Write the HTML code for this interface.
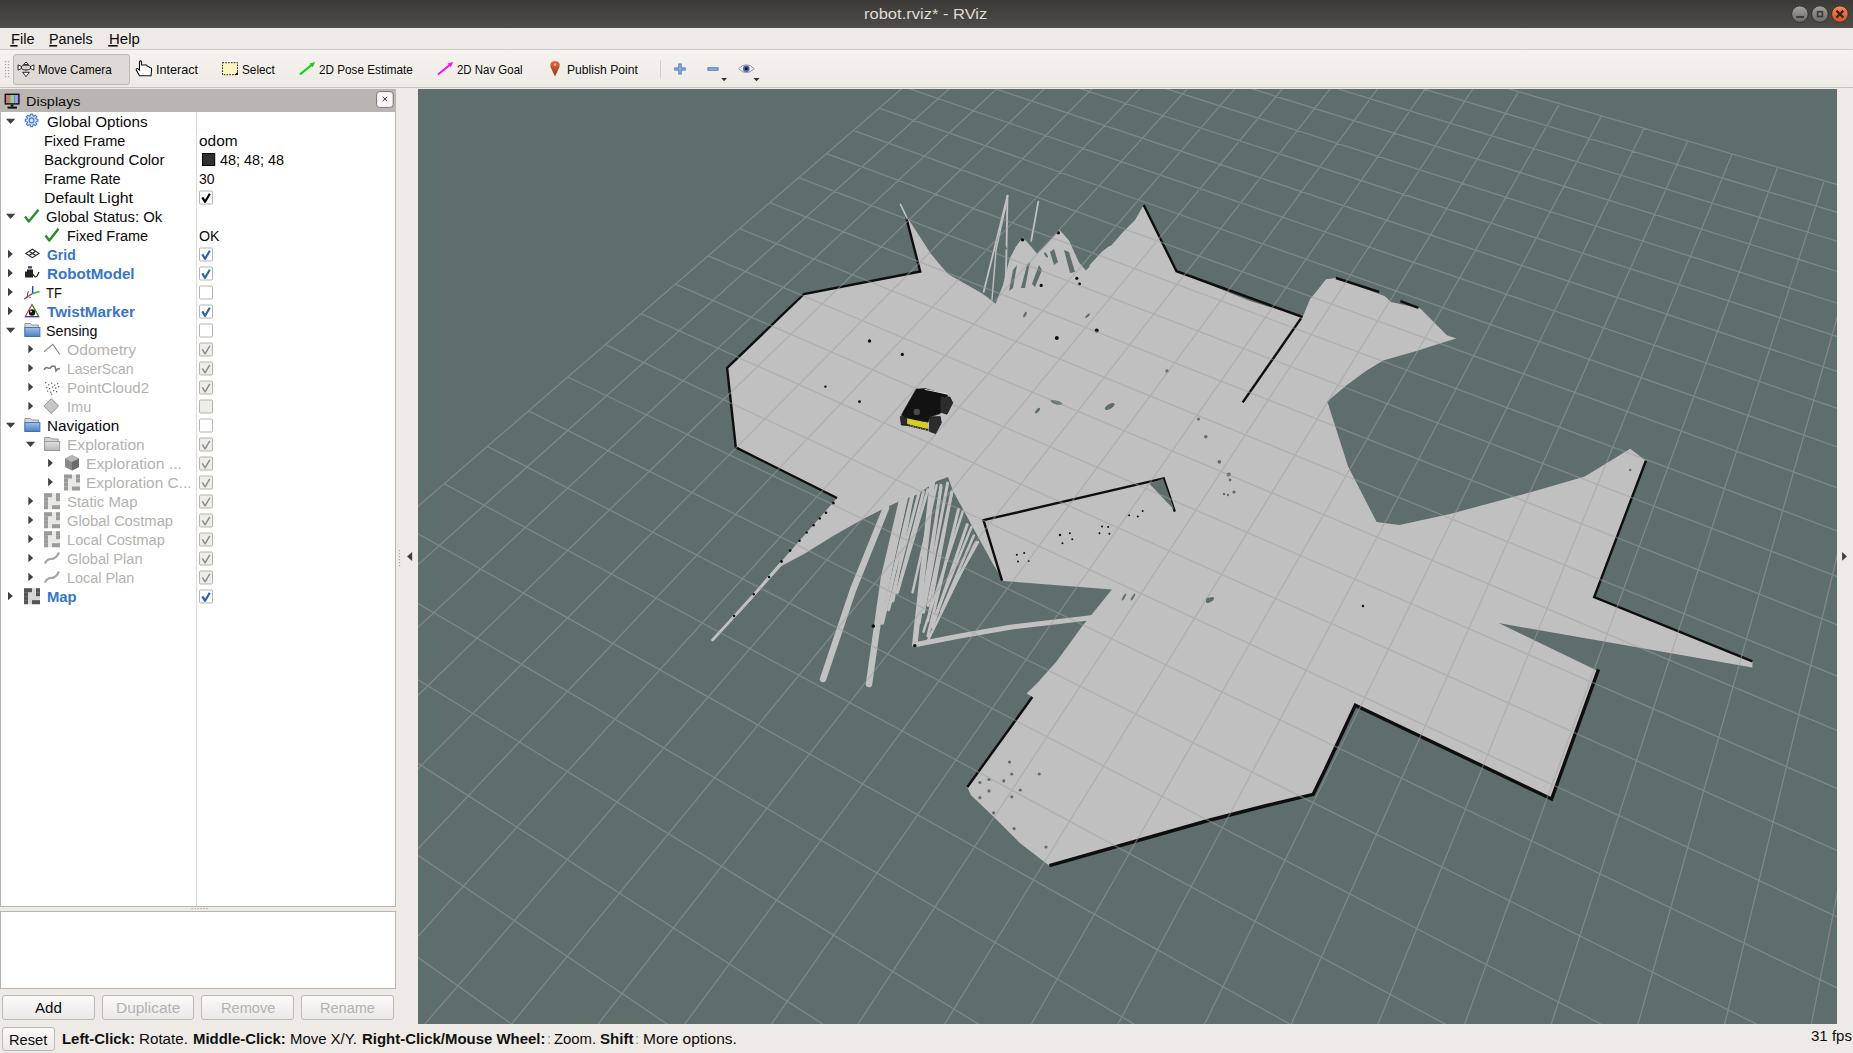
<!DOCTYPE html><html><head><meta charset="utf-8"><style>

*{margin:0;padding:0;box-sizing:border-box}
html,body{width:1853px;height:1053px;overflow:hidden;background:#eeebe6;font-family:"Liberation Sans",sans-serif}
.t{position:absolute;white-space:pre;transform-origin:0 0}
.a{position:absolute}
.vp{position:absolute;left:418px;top:89px}

</style></head><body>
<div class="a" style="left:0;top:0;width:1853px;height:28px;background:linear-gradient(#3b3a36,#4e4c47)"></div>
<div class="a" style="left:0;top:28px;width:1853px;height:21px;background:#eeebe6"></div>
<div class="a" style="left:0;top:49px;width:1853px;height:1px;background:#d0cdc8"></div>
<div class="a" style="left:0;top:50px;width:1853px;height:37px;background:linear-gradient(#f6f3ee,#eeebe6)"></div>
<div class="a" style="left:0;top:87px;width:1853px;height:1px;background:#c6c3be"></div>
<div class="a" style="left:13px;top:54px;width:117px;height:31px;background:#dedad6;border:1px solid #bcb8b3;border-radius:3px"></div>
<div class="a" style="left:0;top:89px;width:396px;height:23px;background:#b9b5b1"></div>
<div class="a" style="left:0;top:112px;width:396px;height:795px;background:#fff;border:1px solid #b9b6b1;border-top:none"></div>
<div class="a" style="left:196px;top:112px;width:1px;height:794px;background:#dcdad7"></div>
<div class="a" style="left:0;top:911px;width:396px;height:78px;background:#fff;border:1px solid #b9b6b1"></div>
<div class="a" style="left:2px;top:995px;width:93px;height:25px;background:linear-gradient(#fbfaf9,#ebe9e6);border:1px solid #bdbab5;border-radius:3px"></div>
<div class="a" style="left:102px;top:995px;width:92px;height:25px;background:linear-gradient(#fbfaf9,#ebe9e6);border:1px solid #bdbab5;border-radius:3px"></div>
<div class="a" style="left:201px;top:995px;width:93px;height:25px;background:linear-gradient(#fbfaf9,#ebe9e6);border:1px solid #bdbab5;border-radius:3px"></div>
<div class="a" style="left:301px;top:995px;width:93px;height:25px;background:linear-gradient(#fbfaf9,#ebe9e6);border:1px solid #bdbab5;border-radius:3px"></div>
<div class="a" style="left:2px;top:1027px;width:53px;height:24px;background:linear-gradient(#fbfaf9,#ebe9e6);border:1px solid #bdbab5;border-radius:3px"></div>
<svg class="vp" width="1419" height="935" viewBox="0 0 1419 935">
<rect width="1419" height="935" fill="rgb(93,110,108)"/>
<polygon fill="rgb(192,192,192)" points="386.0,205.0 502.2,182.5 488.2,129.5 489.3,128.4 499.6,144.3 512.1,163.7 521.3,175.1 530.4,185.3 548.6,195.6 564.6,204.7 572.9,211.1 577.6,214.7 584.7,196.9 591.8,169.6 597.8,157.7 604.9,148.2 613.2,157.7 619.1,164.8 628.6,155.3 641.7,141.1 651.2,151.8 660.7,173.1 667.8,181.4 684.4,164.8 692.0,157.7 705.8,142.3 717.0,131.0 725.7,116.0 758.5,182.2 832.0,212.0 884.6,228.0 892.0,210.3 898.0,203.0 908.0,190.3 917.9,189.0 966.5,206.9 973.1,212.9 1002.4,219.6 1017.0,234.2 1029.0,246.2 1038.3,249.5 1025.0,253.5 998.4,262.1 965.1,271.4 947.9,282.1 927.9,296.7 909.3,312.6 930.1,377.5 958.6,433.0 981.4,436.0 1032.0,425.0 1113.5,403.0 1166.8,387.4 1212.2,359.8 1227.9,371.7 1176.2,508.0 1334.4,572.3 1334.4,578.6 1080.6,534.1 1179.3,581.7 1133.6,710.0 937.3,616.2 894.1,705.1 862.0,713.7 791.0,731.0 631.4,776.7 601.8,753.9 576.7,728.8 552.8,706.0 549.4,698.0 614.3,608.0 608.6,604.6 620.0,593.2 638.3,572.7 654.2,551.0 663.0,538.7 693.9,500.4 585.5,492.0 575.0,475.0 559.0,446.0 546.0,422.0 535.0,402.0 530.0,388.0 519.0,392.0 498.0,406.0 482.0,412.0 467.0,419.0 445.0,430.0 415.0,447.0 386.0,465.0 363.5,477.0 324.0,521.0 294.3,551.0 419.0,409.0 317.8,358.4 309.1,279.0"/>
<polyline fill="none" stroke="#0e0e0e" stroke-width="2.4" stroke-linejoin="miter" points="419.0,409.0 317.8,358.4 309.1,279.0 386.0,205.0 502.2,182.5 488.2,128.4"/>
<polyline fill="none" stroke="#0e0e0e" stroke-width="2.4" stroke-linejoin="miter" points="725.7,116.0 758.5,182.2 884.6,228.0"/>
<polyline fill="none" stroke="#0e0e0e" stroke-width="2.4" stroke-linejoin="miter" points="883.0,229.4 824.7,313.4"/>
<polyline fill="none" stroke="#0e0e0e" stroke-width="2.4" stroke-linejoin="miter" points="1227.9,371.7 1176.2,508.0 1334.4,572.3"/>
<polyline fill="none" stroke="#0e0e0e" stroke-width="3.4" stroke-linejoin="miter" points="1180.5,580.4 1133.6,710.0 937.3,616.2 907.0,681.0 895.2,705.3 846.7,717.0 790.3,731.5 631.4,776.7"/>
<polyline fill="none" stroke="#0e0e0e" stroke-width="2.4" stroke-linejoin="miter" points="549.4,698.0 614.3,608.0"/>
<polyline fill="none" stroke="#0e0e0e" stroke-width="2.4" stroke-linejoin="miter" points="584.0,491.7 565.5,431.2 745.7,389.3 756.8,422.6"/>
<polyline fill="none" stroke="#0e0e0e" stroke-width="2.4" stroke-linejoin="miter" points="917.9,189.0 961.1,202.9"/>
<polyline fill="none" stroke="#0e0e0e" stroke-width="2.4" stroke-linejoin="miter" points="982.4,212.2 1000.4,218.9"/>
<polygon fill="rgb(93,110,108)" points="731.4,394.8 744.9,389.6 756.4,421.0"/>
<polygon fill="rgb(93,110,108)" points="632.0,163.0 636.0,160.0 640.0,173.0 636.0,176.0"/>
<polygon fill="rgb(93,110,108)" points="646.0,161.0 651.0,163.0 657.0,183.0 652.0,184.0"/>
<polygon fill="rgb(93,110,108)" points="595.0,181.0 599.0,176.0 595.0,199.0 591.0,202.0"/>
<polygon fill="rgb(93,110,108)" points="609.0,176.0 612.0,173.0 607.0,199.0 603.0,199.0"/>
<polygon fill="rgb(93,110,108)" points="621.0,176.0 624.0,181.0 617.0,198.0 614.0,195.0"/>
<polyline fill="none" stroke="rgb(193,193,193)" stroke-width="1.8" stroke-linecap="round" stroke-linejoin="round" points="589.5,106.7 565.7,202.8"/>
<polyline fill="none" stroke="rgb(193,193,193)" stroke-width="1.6" stroke-linecap="round" stroke-linejoin="round" points="482.5,115.3 489.0,129.0"/>
<polyline fill="none" stroke="rgb(193,193,193)" stroke-width="2.6" stroke-linecap="round" stroke-linejoin="round" points="364.0,473.0 334.0,508.0 294.5,551.0"/>
<polyline fill="none" stroke="rgb(193,193,193)" stroke-width="1.8" stroke-linecap="round" stroke-linejoin="round" points="589.5,106.7 588.3,169.6 587.0,211.0"/>
<polyline fill="none" stroke="rgb(193,193,193)" stroke-width="1.4" stroke-linecap="round" stroke-linejoin="round" points="588.0,116.0 578.0,161.0 574.0,211.0"/>
<polyline fill="none" stroke="rgb(193,193,193)" stroke-width="1.8" stroke-linecap="round" stroke-linejoin="round" points="620.3,112.6 613.2,151.8"/>
<polyline fill="none" stroke="rgb(193,193,193)" stroke-width="2.0" stroke-linecap="round" stroke-linejoin="round" points="672.5,176.7 684.4,163.6 692.0,157.7"/>
<polyline fill="none" stroke="rgb(193,193,193)" stroke-width="6.5" stroke-linecap="round" stroke-linejoin="round" points="468.0,419.0 435.0,501.0 405.1,590.0"/>
<polyline fill="none" stroke="rgb(193,193,193)" stroke-width="6.5" stroke-linecap="round" stroke-linejoin="round" points="484.0,412.0 466.0,489.0 451.0,595.0"/>
<polyline fill="none" stroke="rgb(193,193,193)" stroke-width="5.5" stroke-linecap="round" stroke-linejoin="round" points="514.3,394.0 506.0,471.0 496.8,555.7"/>
<polyline fill="none" stroke="rgb(193,193,193)" stroke-width="5.0" stroke-linecap="round" stroke-linejoin="round" points="496.8,555.7 542.0,547.0 592.0,538.2 673.0,528.8"/>
<polyline fill="none" stroke="rgb(193,193,193)" stroke-width="3.0" stroke-linecap="round" stroke-linejoin="round" points="494.6,405.0 475.0,512.0"/>
<polyline fill="none" stroke="rgb(193,193,193)" stroke-width="3.0" stroke-linecap="round" stroke-linejoin="round" points="505.5,402.8 479.3,503.3"/>
<polyline fill="none" stroke="rgb(193,193,193)" stroke-width="3.0" stroke-linecap="round" stroke-linejoin="round" points="523.0,396.3 505.5,523.0"/>
<polyline fill="none" stroke="rgb(193,193,193)" stroke-width="2.5" stroke-linecap="round" stroke-linejoin="round" points="534.0,402.8 509.9,531.7"/>
<polyline fill="none" stroke="rgb(193,193,193)" stroke-width="2.5" stroke-linecap="round" stroke-linejoin="round" points="544.8,422.5 505.5,542.6"/>
<polyline fill="none" stroke="rgb(193,193,193)" stroke-width="2.5" stroke-linecap="round" stroke-linejoin="round" points="553.6,437.8 514.3,533.8"/>
<polyline fill="none" stroke="rgb(193,193,193)" stroke-width="2.5" stroke-linecap="round" stroke-linejoin="round" points="558.0,453.0 510.0,551.3"/>
<polyline fill="none" stroke="rgb(193,193,193)" stroke-width="3.0" stroke-linecap="round" stroke-linejoin="round" points="488.0,409.0 462.0,531.0"/>
<polyline fill="none" stroke="rgb(193,193,193)" stroke-width="4.0" stroke-linecap="round" stroke-linejoin="round" points="494.6,405.0 464.1,533.8"/>
<polyline fill="none" stroke="rgb(193,193,193)" stroke-width="3.0" stroke-linecap="round" stroke-linejoin="round" points="501.2,402.8 470.6,520.7"/>
<polyline fill="none" stroke="rgb(193,193,193)" stroke-width="3.0" stroke-linecap="round" stroke-linejoin="round" points="509.9,400.7 479.3,503.3"/>
<polyline fill="none" stroke="rgb(193,193,193)" stroke-width="3.0" stroke-linecap="round" stroke-linejoin="round" points="523.0,398.5 501.2,533.8"/>
<polyline fill="none" stroke="rgb(193,193,193)" stroke-width="3.0" stroke-linecap="round" stroke-linejoin="round" points="529.6,394.1 505.5,522.9"/>
<polyline fill="none" stroke="rgb(193,193,193)" stroke-width="3.0" stroke-linecap="round" stroke-linejoin="round" points="533.9,402.8 509.9,516.4"/>
<polyline fill="none" stroke="rgb(193,193,193)" stroke-width="3.0" stroke-linecap="round" stroke-linejoin="round" points="540.5,420.3 509.9,546.9"/>
<polyline fill="none" stroke="rgb(193,193,193)" stroke-width="3.0" stroke-linecap="round" stroke-linejoin="round" points="549.2,435.6 514.3,538.2"/>
<polyline fill="none" stroke="rgb(193,193,193)" stroke-width="2.6" stroke-linecap="round" stroke-linejoin="round" points="555.8,446.5 523.0,522.9"/>
<polyline fill="none" stroke="rgb(193,193,193)" stroke-width="2.4" stroke-linecap="round" stroke-linejoin="round" points="560.1,453.1 531.7,503.3"/>
<polyline fill="none" stroke="rgb(193,193,193)" stroke-width="3.5" stroke-linecap="round" stroke-linejoin="round" points="488.1,409.4 457.5,546.9"/>
<polyline fill="none" stroke="rgb(193,193,193)" stroke-width="2.5" stroke-linecap="round" stroke-linejoin="round" points="518.6,396.3 494.6,503.3"/>
<circle cx="591.5" cy="673.0" r="1.6" fill="rgb(93,110,108)"/>
<circle cx="593.8" cy="685.0" r="1.6" fill="rgb(93,110,108)"/>
<circle cx="621.2" cy="685.0" r="1.6" fill="rgb(93,110,108)"/>
<circle cx="571.0" cy="690.5" r="1.6" fill="rgb(93,110,108)"/>
<circle cx="585.8" cy="691.9" r="1.6" fill="rgb(93,110,108)"/>
<circle cx="561.9" cy="693.5" r="1.6" fill="rgb(93,110,108)"/>
<circle cx="602.2" cy="701.0" r="1.6" fill="rgb(93,110,108)"/>
<circle cx="571.0" cy="701.9" r="1.6" fill="rgb(93,110,108)"/>
<circle cx="593.8" cy="707.8" r="1.6" fill="rgb(93,110,108)"/>
<circle cx="561.9" cy="708.7" r="1.6" fill="rgb(93,110,108)"/>
<circle cx="575.6" cy="723.8" r="1.6" fill="rgb(93,110,108)"/>
<circle cx="596.1" cy="739.7" r="1.6" fill="rgb(93,110,108)"/>
<circle cx="628.0" cy="758.0" r="1.6" fill="rgb(93,110,108)"/>
<circle cx="749.0" cy="282.0" r="1.7" fill="rgb(93,110,108)"/>
<circle cx="780.5" cy="330.0" r="1.5" fill="rgb(93,110,108)"/>
<circle cx="787.8" cy="347.8" r="1.8" fill="rgb(93,110,108)"/>
<circle cx="801.3" cy="372.9" r="1.8" fill="rgb(93,110,108)"/>
<circle cx="810.7" cy="385.4" r="2.0" fill="rgb(93,110,108)"/>
<circle cx="816.0" cy="403.0" r="1.6" fill="rgb(93,110,108)"/>
<circle cx="812.0" cy="391.0" r="1.4" fill="rgb(93,110,108)"/>
<circle cx="806.0" cy="405.0" r="1.2" fill="rgb(93,110,108)"/>
<circle cx="810.0" cy="406.0" r="1.2" fill="rgb(93,110,108)"/>
<circle cx="1212.2" cy="381.0" r="1.2" fill="rgb(93,110,108)"/>
<circle cx="790.0" cy="511.0" r="2.4" fill="rgb(93,110,108)"/>
<ellipse cx="607.0" cy="225.6" rx="3.2" ry="1.2" transform="rotate(-60 607.0 225.6)" fill="rgb(93,110,108)"/>
<ellipse cx="669.7" cy="226.7" rx="3.0" ry="1.1" transform="rotate(-40 669.7 226.7)" fill="rgb(93,110,108)"/>
<ellipse cx="638.4" cy="313.4" rx="6.0" ry="1.8" transform="rotate(15 638.4 313.4)" fill="rgb(93,110,108)"/>
<ellipse cx="619.6" cy="321.7" rx="3.5" ry="1.4" transform="rotate(-50 619.6 321.7)" fill="rgb(93,110,108)"/>
<ellipse cx="691.7" cy="317.5" rx="5.5" ry="2.4" transform="rotate(-30 691.7 317.5)" fill="rgb(93,110,108)"/>
<ellipse cx="706.0" cy="508.0" rx="4.0" ry="1.1" transform="rotate(-60 706.0 508.0)" fill="rgb(93,110,108)"/>
<ellipse cx="715.0" cy="508.0" rx="4.0" ry="1.1" transform="rotate(-60 715.0 508.0)" fill="rgb(93,110,108)"/>
<ellipse cx="792.0" cy="511.0" rx="4.5" ry="2.0" transform="rotate(-30 792.0 511.0)" fill="rgb(93,110,108)"/>
<ellipse cx="587.0" cy="158.0" rx="3.0" ry="1.2" transform="rotate(60 587.0 158.0)" fill="rgb(93,110,108)"/>
<ellipse cx="628.0" cy="166.0" rx="3.0" ry="1.2" transform="rotate(60 628.0 166.0)" fill="rgb(93,110,108)"/>
<circle cx="451.5" cy="252.0" r="1.7" fill="#0e0e0e"/>
<circle cx="484.3" cy="265.4" r="1.6" fill="#0e0e0e"/>
<circle cx="407.4" cy="297.6" r="1.2" fill="#0e0e0e"/>
<circle cx="441.5" cy="312.7" r="1.4" fill="#0e0e0e"/>
<circle cx="638.8" cy="249.1" r="2.0" fill="#0e0e0e"/>
<circle cx="678.7" cy="241.4" r="2.0" fill="#0e0e0e"/>
<circle cx="658.8" cy="189.3" r="1.6" fill="#0e0e0e"/>
<circle cx="661.6" cy="195.0" r="1.4" fill="#0e0e0e"/>
<circle cx="623.2" cy="196.4" r="1.6" fill="#0e0e0e"/>
<circle cx="604.6" cy="150.8" r="1.8" fill="#0e0e0e"/>
<circle cx="640.3" cy="143.7" r="1.8" fill="#0e0e0e"/>
<circle cx="598.8" cy="465.8" r="1" fill="#0e0e0e"/>
<circle cx="606.2" cy="464.1" r="1" fill="#0e0e0e"/>
<circle cx="600.0" cy="472.5" r="1" fill="#0e0e0e"/>
<circle cx="610.6" cy="472.0" r="1" fill="#0e0e0e"/>
<circle cx="642.0" cy="446.0" r="1.2" fill="#0e0e0e"/>
<circle cx="651.9" cy="444.3" r="1" fill="#0e0e0e"/>
<circle cx="644.5" cy="454.2" r="1" fill="#0e0e0e"/>
<circle cx="654.3" cy="450.3" r="1" fill="#0e0e0e"/>
<circle cx="684.0" cy="437.4" r="1" fill="#0e0e0e"/>
<circle cx="690.1" cy="437.9" r="1" fill="#0e0e0e"/>
<circle cx="681.5" cy="444.3" r="1" fill="#0e0e0e"/>
<circle cx="691.4" cy="444.8" r="1" fill="#0e0e0e"/>
<circle cx="711.1" cy="426.3" r="1" fill="#0e0e0e"/>
<circle cx="719.8" cy="427.5" r="1" fill="#0e0e0e"/>
<circle cx="724.7" cy="422.1" r="1" fill="#0e0e0e"/>
<circle cx="455.3" cy="537.1" r="1.8" fill="#0e0e0e"/>
<circle cx="496.8" cy="556.8" r="1.8" fill="#0e0e0e"/>
<circle cx="945.0" cy="517.0" r="1.2" fill="#0e0e0e"/>
<circle cx="415.3" cy="414.0" r="1.5" fill="#0e0e0e"/>
<circle cx="408.0" cy="423.8" r="1.3" fill="#0e0e0e"/>
<circle cx="401.8" cy="429.5" r="1.2" fill="#0e0e0e"/>
<circle cx="395.6" cy="436.2" r="1.2" fill="#0e0e0e"/>
<circle cx="388.7" cy="443.6" r="1.2" fill="#0e0e0e"/>
<circle cx="381.5" cy="451.7" r="1.2" fill="#0e0e0e"/>
<circle cx="372.1" cy="461.6" r="1.3" fill="#0e0e0e"/>
<circle cx="363.5" cy="472.5" r="1.4" fill="#0e0e0e"/>
<circle cx="351.1" cy="488.0" r="1.2" fill="#0e0e0e"/>
<circle cx="335.8" cy="505.3" r="1.2" fill="#0e0e0e"/>
<circle cx="316.1" cy="527.0" r="1.2" fill="#0e0e0e"/>
<path fill="none" stroke="rgb(160,160,164)" stroke-opacity="0.5" stroke-width="1.35" d="M-1278.33,1521.32L7430.87,16589.35M-1150.82,1411.20L8769.95,16605.38M-1033.44,1309.83L10111.54,16621.44M-925.02,1216.20L9921.04,14726.03M-824.58,1129.47L8260.54,11479.56M-731.27,1048.88L7164.11,9335.90M-644.35,973.82L6386.05,7814.70M-563.19,903.74L5805.28,6679.22M-487.24,838.14L5355.21,5799.26M-416.01,776.63L4996.17,5097.30M-349.07,718.82L4703.08,4524.28M-286.05,664.40L4459.30,4047.66M-226.61,613.07L4253.36,3645.01M-170.46,564.57L4077.07,3300.35M-117.32,518.69L3924.46,3001.99M-66.97,475.21L3791.07,2741.19M-19.19,433.94L3673.47,2511.27M26.21,394.73L3569.03,2307.06M69.40,357.43L3475.64,2124.48M110.55,321.89L3391.64,1960.25M149.80,288.00L3315.69,1811.75M187.26,255.65L3246.67,1676.82M223.07,224.73L3183.69,1553.68M257.33,195.14L3125.98,1440.86M290.13,166.81L3072.91,1337.09M321.58,139.66L3023.94,1241.35M351.74,113.61L2978.61,1152.72M380.70,88.59L2936.53,1070.46M408.53,64.56L2897.37,993.88M435.30,41.45L2860.82,922.43M461.06,19.20L2826.64,855.61M485.86,-2.22L2794.61,792.98M509.77,-22.87L2764.52,734.16M532.83,-42.78L2736.21,678.81M555.08,-61.99L2709.53,626.63M576.56,-80.55L2684.33,577.36M597.32,-98.48L2660.49,530.76M617.39,-115.81L2637.92,486.62M636.81,-132.57L2616.50,444.76M-1278.33,1521.32L636.81,-132.57M-1240.44,1586.87L668.55,-123.31M-1200.64,1655.73L700.89,-113.88M-1158.77,1728.17L733.83,-104.28M-1114.68,1804.45L767.39,-94.49M-1068.18,1884.91L801.60,-84.51M-1019.07,1969.88L836.46,-74.35M-967.11,2059.77L872.01,-63.98M-912.06,2155.01L908.25,-53.41M-853.64,2256.09L945.21,-42.63M-791.51,2363.58L982.91,-31.64M-725.33,2478.09L1021.38,-20.42M-654.67,2600.34L1060.63,-8.98M-579.06,2731.14L1100.69,2.71M-497.98,2871.42L1141.59,14.64M-410.80,3022.25L1183.35,26.81M-316.81,3184.87L1226.01,39.25M-215.17,3360.72L1269.58,51.96M-104.92,3551.47L1314.10,64.94M15.09,3759.10L1359.61,78.21M146.22,3985.97L1406.13,91.78M290.08,4234.88L1453.69,105.65M448.63,4509.19L1502.34,119.84M624.24,4813.01L1552.11,134.35M819.81,5151.37L1603.04,149.21M1038.95,5530.51L1655.18,164.41M1286.20,5958.29L1708.55,179.98M1567.34,6444.69L1763.22,195.92M1889.84,7002.66L1819.23,212.25M2263.57,7649.25L1876.62,228.99M2701.77,8407.40L1935.45,246.14M3222.71,9308.69L1995.77,263.74M3852.26,10397.90L2057.65,281.78M4628.35,11740.62L2121.13,300.29M5608.87,13437.05L2186.30,319.30M6886.85,15648.12L2253.20,338.81M7947.89,16693.13L2321.92,358.85M8667.48,16627.90L2392.53,379.44M9381.85,16563.14L2465.11,400.61M10182.08,16692.65L2539.73,422.37M10893.55,16627.41L2616.50,444.76"/>
<polygon fill="#121212" stroke="#1a1a1a" stroke-width="0.6" points="498.2,300.1 507.3,299.6 529.6,306.1 522.2,324.6 511.9,328.1 510.2,333.2 489.1,329.8 483.4,326.3 485.7,321.8"/>
<polygon fill="#2c2c2c" stroke="#151515" stroke-width="0.8" points="522.2,307.5 531.9,308.1 534.7,313.8 529.0,325.2 522.2,322.9"/>
<polygon fill="#2c2c2c" stroke="#151515" stroke-width="0.8" points="511.9,328.1 522.2,327.5 523.3,333.8 517.6,344.6 511.3,342.3"/>
<polygon fill="#2a2a2a" stroke="#151515" stroke-width="0.8" points="482.3,327.5 489.1,328.1 490.2,336.6 483.4,336.0"/>
<polygon fill="#151515"  points="489.1,334.3 510.2,339.5 510.2,342.0 490.8,337.2"/>
<polygon fill="#d6cf1c"  points="489.1,329.2 510.2,334.3 509.6,340.0 489.1,334.9"/>
<polyline fill="none" stroke="#e8e8e8" stroke-width="0.9" points="506.8,300.4 529.6,305.0"/>
<polyline fill="none" stroke="#bdbdbd" stroke-width="0.8" stroke-dasharray="1.5,1" points="492.0,336.6 509.6,341.2"/>
<circle cx="498.8" cy="322.9" r="3.2" fill="#4a4a4a"/>
</svg>
<svg class="a" style="left:0;top:0" width="1853" height="1053"><defs>
<linearGradient id="wbg" x1="0" y1="0" x2="0" y2="1"><stop offset="0" stop-color="#a3a29d"/><stop offset="1" stop-color="#6a6964"/></linearGradient>
<linearGradient id="wcl" x1="0" y1="0" x2="0" y2="1"><stop offset="0" stop-color="#f58a5c"/><stop offset="1" stop-color="#df4f1c"/></linearGradient>
<linearGradient id="pin" x1="0" y1="0" x2="0" y2="1"><stop offset="0" stop-color="#e8643c"/><stop offset="1" stop-color="#8a3a18"/></linearGradient>
<linearGradient id="fold" x1="0" y1="0" x2="0" y2="1"><stop offset="0" stop-color="#9cc0ea"/><stop offset="1" stop-color="#4a7fc4"/></linearGradient>
<linearGradient id="foldg" x1="0" y1="0" x2="0" y2="1"><stop offset="0" stop-color="#e2e0dd"/><stop offset="1" stop-color="#b9b7b3"/></linearGradient>
</defs><circle cx="1799.9" cy="14.1" r="8.3" fill="url(#wbg)" stroke="#34332f" stroke-width="1"/><rect x="1796.2" y="16" width="7.7" height="1.9" fill="#3a3934"/><circle cx="1819.9" cy="14.1" r="8.3" fill="url(#wbg)" stroke="#34332f" stroke-width="1"/><rect x="1817.6" y="11.7" width="4.8" height="4.8" fill="none" stroke="#3a3934" stroke-width="1.6"/><circle cx="1839.9" cy="14.1" r="8.3" fill="url(#wcl)" stroke="#34332f" stroke-width="1"/><path d="M1836.4,10.6L1843.4,17.6M1843.4,10.6L1836.4,17.6" stroke="#2c2a1f" stroke-width="2.2"/><rect x="10.2" y="45" width="7.4" height="1.6" fill="#111"/><rect x="49.2" y="45" width="8.0" height="1.6" fill="#111"/><rect x="108.2" y="45" width="9.6" height="1.6" fill="#111"/><rect x="4.9" y="61.0" width="1.2" height="1.2" fill="#a9a7a3"/><rect x="4.9" y="64.0" width="1.2" height="1.2" fill="#a9a7a3"/><rect x="4.9" y="67.0" width="1.2" height="1.2" fill="#a9a7a3"/><rect x="4.9" y="70.0" width="1.2" height="1.2" fill="#a9a7a3"/><rect x="4.9" y="73.0" width="1.2" height="1.2" fill="#a9a7a3"/><rect x="4.9" y="76.0" width="1.2" height="1.2" fill="#a9a7a3"/><rect x="7.9" y="61.0" width="1.2" height="1.2" fill="#a9a7a3"/><rect x="7.9" y="64.0" width="1.2" height="1.2" fill="#a9a7a3"/><rect x="7.9" y="67.0" width="1.2" height="1.2" fill="#a9a7a3"/><rect x="7.9" y="70.0" width="1.2" height="1.2" fill="#a9a7a3"/><rect x="7.9" y="73.0" width="1.2" height="1.2" fill="#a9a7a3"/><rect x="7.9" y="76.0" width="1.2" height="1.2" fill="#a9a7a3"/><g stroke="#151515" stroke-width="0.9" fill="#fff" stroke-linejoin="round"><rect x="25.4" y="63.5" width="1.2" height="9.5" fill="#b8b8b8" stroke="none"/><path d="M18.1,64.9 L21.6,66.6 L21.6,68.4 L18.1,70.1 Z"/><path d="M33.9,64.9 L30.4,66.6 L30.4,68.4 L33.9,70.1 Z"/><ellipse cx="26" cy="67.5" rx="4.6" ry="2.5" fill="none"/><path d="M26,62 L28.4,64.6 L23.6,64.6 Z"/><path d="M22.6,72.3 L29.4,72.3 L26,76.6 Z"/></g><path d="M139.5,61.5 L139.5,70 L137.5,68.5 Q136,68.3 136.3,70 L139.5,75.8 L151,75.8 L151.6,69.5 Q151.5,67.2 149.5,67.5 L149.5,68 Q149.3,66 147.3,66.3 Q147,64.6 145,65 L141.5,65 L141.5,61.5 Q140.5,60.3 139.5,61.5 Z" fill="#fff" stroke="#111" stroke-width="1.1"/><rect x="222.5" y="62.7" width="15" height="12" fill="#fbf4bf" stroke="#222" stroke-width="1" stroke-dasharray="1.6,1.2"/><path d="M234.5,75 L237.8,71.8 L237.8,75 Z" fill="#111"/><path d="M300,74.3 L313,63.8" stroke="#1bd01b" stroke-width="2.2"/><path d="M315.2,62 L309.5,63.6 L312.8,67.2 Z" fill="#1bd01b"/><path d="M438,74.5 L451,64" stroke="#ef1bef" stroke-width="2.2"/><path d="M453.2,62 L447.5,63.6 L450.8,67.2 Z" fill="#ef1bef"/><path d="M555,76.6 L550.5,67 Q549.3,61 555,61 Q560.7,61 559.5,67 Z" fill="url(#pin)"/><circle cx="555" cy="64.8" r="1.3" fill="#f7b49a"/><rect x="660" y="60.5" width="1" height="18" fill="#d2cfca"/><path d="M680,63.5 L680,74.5 M674.3,69 L685.7,69" stroke="#3a6cc0" stroke-width="3.2"/><path d="M680,64.3 L680,73.7 M675.1,69 L684.9,69" stroke="#a9c6ee" stroke-width="1.2"/><path d="M707.5,69 L718.5,69" stroke="#3a6cc0" stroke-width="3.4"/><path d="M708.3,69 L717.7,69" stroke="#a9c6ee" stroke-width="1.3"/><path d="M721.2,78 L727,78 L724.1,81.2 Z" fill="#333"/><path d="M738.5,68.7 Q746.3,60.8 754.2,68.7 Q746.3,76.6 738.5,68.7 Z" fill="#eef0f4" stroke="#8d96a6" stroke-width="1"/><circle cx="746.3" cy="68.7" r="3.3" fill="#4a62a8"/><circle cx="746.3" cy="68.7" r="1.4" fill="#111"/><path d="M753.4,78 L759.6,78 L756.5,81.2 Z" fill="#333"/><rect x="4.6" y="93.6" width="15" height="11" fill="#111"/><rect x="6" y="95" width="4.1" height="8.2" fill="#c97a7a"/><rect x="10.1" y="95" width="4.2" height="8.2" fill="#8fd08f"/><rect x="14.3" y="95" width="3.9" height="8.2" fill="#9d9de8"/><rect x="10.8" y="104.6" width="2.6" height="2" fill="#111"/><rect x="7.5" y="106.6" width="9.4" height="2" fill="#111"/><rect x="376.6" y="91.6" width="16.6" height="15.8" rx="3" fill="#f8f7f5" stroke="#7a7774" stroke-width="1"/><path d="M382.7,96.9 L387.1,101.2 M387.1,96.9 L382.7,101.2" stroke="#3a3a3a" stroke-width="1.0"/><path d="M407.1,556.4 L412.1,552.1 L412.1,560.9 Z" fill="#3c3c3c"/><rect x="398.9" y="550.0" width="1.2" height="1.2" fill="#a9a7a3"/><rect x="398.9" y="553.0" width="1.2" height="1.2" fill="#a9a7a3"/><rect x="398.9" y="556.0" width="1.2" height="1.2" fill="#a9a7a3"/><rect x="398.9" y="559.0" width="1.2" height="1.2" fill="#a9a7a3"/><rect x="398.9" y="562.0" width="1.2" height="1.2" fill="#a9a7a3"/><rect x="398.9" y="565.0" width="1.2" height="1.2" fill="#a9a7a3"/><path d="M1842.1,552.1 L1842.1,560.8 L1846.9,556.4 Z" fill="#3c3c3c"/><rect x="191.5" y="908" width="1.2" height="1.2" fill="#a9a7a3"/><rect x="194.5" y="908" width="1.2" height="1.2" fill="#a9a7a3"/><rect x="197.5" y="908" width="1.2" height="1.2" fill="#a9a7a3"/><rect x="200.5" y="908" width="1.2" height="1.2" fill="#a9a7a3"/><rect x="203.5" y="908" width="1.2" height="1.2" fill="#a9a7a3"/><rect x="206.5" y="908" width="1.2" height="1.2" fill="#a9a7a3"/><path d="M6.0,118.8 L15.2,118.8 L10.6,124.0 Z" fill="#404040"/><path d="M6.0,213.8 L15.2,213.8 L10.6,219.0 Z" fill="#404040"/><path d="M6.0,327.8 L15.2,327.8 L10.6,333.0 Z" fill="#404040"/><path d="M6.0,422.8 L15.2,422.8 L10.6,428.0 Z" fill="#404040"/><path d="M25.9,441.8 L35.1,441.8 L30.5,447.0 Z" fill="#404040"/><path d="M8.0,249.8 L8.0,258.2 L12.8,254.0 Z" fill="#404040"/><path d="M8.0,268.8 L8.0,277.2 L12.8,273.0 Z" fill="#404040"/><path d="M8.0,287.8 L8.0,296.2 L12.8,292.0 Z" fill="#404040"/><path d="M8.0,306.8 L8.0,315.2 L12.8,311.0 Z" fill="#404040"/><path d="M28.4,344.8 L28.4,353.2 L33.2,349.0 Z" fill="#404040"/><path d="M28.4,363.8 L28.4,372.2 L33.2,368.0 Z" fill="#404040"/><path d="M28.4,382.8 L28.4,391.2 L33.2,387.0 Z" fill="#404040"/><path d="M28.4,401.8 L28.4,410.2 L33.2,406.0 Z" fill="#404040"/><path d="M48.1,458.8 L48.1,467.2 L52.9,463.0 Z" fill="#404040"/><path d="M48.1,477.8 L48.1,486.2 L52.9,482.0 Z" fill="#404040"/><path d="M28.4,496.8 L28.4,505.2 L33.2,501.0 Z" fill="#404040"/><path d="M28.4,515.8 L28.4,524.2 L33.2,520.0 Z" fill="#404040"/><path d="M28.4,534.8 L28.4,543.2 L33.2,539.0 Z" fill="#404040"/><path d="M28.4,553.8 L28.4,562.2 L33.2,558.0 Z" fill="#404040"/><path d="M28.4,572.8 L28.4,581.2 L33.2,577.0 Z" fill="#404040"/><path d="M8.0,591.8 L8.0,600.2 L12.8,596.0 Z" fill="#404040"/><polygon points="36.09,119.03 37.90,119.29 37.90,121.51 36.09,121.77 35.75,122.61 36.84,124.07 35.27,125.64 33.81,124.55 32.97,124.89 32.71,126.70 30.49,126.70 30.23,124.89 29.39,124.55 27.93,125.64 26.36,124.07 27.45,122.61 27.11,121.77 25.30,121.51 25.30,119.29 27.11,119.03 27.45,118.19 26.36,116.73 27.93,115.16 29.39,116.25 30.23,115.91 30.49,114.10 32.71,114.10 32.97,115.91 33.81,116.25 35.27,115.16 36.84,116.73 35.75,118.19" fill="#d9e5f6" stroke="#4a7fcf" stroke-width="1.2" stroke-linejoin="round"/><circle cx="31.6" cy="120.4" r="2.5" fill="#b9cdef" stroke="#4a7fcf" stroke-width="1.1"/><circle cx="31.6" cy="120.4" r="1.0" fill="#fff"/><path d="M25,216.5 L28.8,221.5 L38.5,209.8" fill="none" stroke="#2b8a2b" stroke-width="2.4" stroke-linejoin="round"/><path d="M45.5,235.5 L49.3,240.5 L58.5,228.8" fill="none" stroke="#2b8a2b" stroke-width="2.4" stroke-linejoin="round"/><g fill="none" stroke="#222" stroke-width="1.1"><path d="M25.8,253.4 L32.4,249.2 L39,253.4 L32.4,257.6 Z"/><path d="M29.1,251.3 L35.7,255.5 M35.7,251.3 L29.1,255.5"/></g><g fill="#222"><rect x="28" y="266.0" width="4" height="2.5" rx="1"/><rect x="27" y="269.5" width="6" height="8" /><rect x="25" y="271.5" width="2" height="6"/></g><rect x="28.5" y="266.4" width="3" height="1" fill="#7ba0e0"/><path d="M33,274.0 Q35,278.5 37,276.0 L39,272.0" fill="none" stroke="#222" stroke-width="1.2"/><path d="M24.2,299.0 L32.5,293.5" stroke="#e02020" stroke-width="1.4"/><path d="M32.5,293.5 L39.6,291.5" stroke="#20c020" stroke-width="1.4"/><path d="M32.5,293.5 L32.8,286.0" stroke="#2040e0" stroke-width="1.4"/><path d="M27,297.0 L28.3,291.0" stroke="#2040e0" stroke-width="1"/><path d="M27.6,296.5 L31,297.6" stroke="#20c020" stroke-width="1"/><path d="M32,304.5 L38.8,316.6 L25.2,316.6 Z" fill="none" stroke="#d02020" stroke-width="1.1"/><path d="M32,304.5 L38.8,316.6" stroke="#20b020" stroke-width="1.1"/><path d="M25.2,316.6 L38.8,316.6" stroke="#2040e0" stroke-width="1.1"/><circle cx="32" cy="312.5" r="3.2" fill="#111"/><circle cx="31" cy="311.5" r="1" fill="#ddd"/><path d="M24.9,323.5 L30.4,323.5 L31.9,325.0 L38.4,325.0 L38.4,336.5 L24.9,336.5 Z" fill="#d8d6d2" stroke="#8f8d89" stroke-width="0.9"/><rect x="24.9" y="327.5" width="15" height="9" fill="url(#fold)" stroke="#3d6db0" stroke-width="0.9"/><path d="M24.9,418.5 L30.4,418.5 L31.9,420.0 L38.4,420.0 L38.4,431.5 L24.9,431.5 Z" fill="#d8d6d2" stroke="#8f8d89" stroke-width="0.9"/><rect x="24.9" y="422.5" width="15" height="9" fill="url(#fold)" stroke="#3d6db0" stroke-width="0.9"/><path d="M44.7,437.5 L50.2,437.5 L51.7,439.0 L58.2,439.0 L58.2,450.5 L44.7,450.5 Z" fill="#d8d6d2" stroke="#8f8d89" stroke-width="0.9"/><rect x="44.7" y="441.5" width="15" height="9" fill="url(#foldg)" stroke="#9a9894" stroke-width="0.9"/><path d="M44,351.8 L52.8,344.4 L59.8,354.5" fill="none" stroke="#8c8c8c" stroke-width="1.2"/><path d="M44,369.8 Q46,366.5 48,368.0 Q50,369.2 52,366.0 L55,366.5 L56,371.0 L57.5,369.0 L60,368.5" fill="none" stroke="#7c7c7c" stroke-width="1.5"/><rect x="45" y="382.0" width="1.3" height="1.3" fill="#6f6f6f"/><rect x="48" y="384.0" width="1.3" height="1.3" fill="#6f6f6f"/><rect x="51" y="382.5" width="1.3" height="1.3" fill="#6f6f6f"/><rect x="54" y="384.5" width="1.3" height="1.3" fill="#6f6f6f"/><rect x="57" y="383.0" width="1.3" height="1.3" fill="#6f6f6f"/><rect x="46" y="387.0" width="1.3" height="1.3" fill="#6f6f6f"/><rect x="49" y="388.0" width="1.3" height="1.3" fill="#6f6f6f"/><rect x="52" y="386.5" width="1.3" height="1.3" fill="#6f6f6f"/><rect x="55" y="387.5" width="1.3" height="1.3" fill="#6f6f6f"/><rect x="58" y="386.0" width="1.3" height="1.3" fill="#6f6f6f"/><rect x="47" y="390.5" width="1.3" height="1.3" fill="#6f6f6f"/><rect x="50" y="391.5" width="1.3" height="1.3" fill="#6f6f6f"/><rect x="53" y="390.0" width="1.3" height="1.3" fill="#6f6f6f"/><rect x="56" y="391.0" width="1.3" height="1.3" fill="#6f6f6f"/><rect x="51" y="393.5" width="1.3" height="1.3" fill="#6f6f6f"/><path d="M43.8,406.0 L51.2,398.6 L58.6,406.0 L51.2,413.4 Z" fill="#c6c6c6" stroke="#8f8f8f" stroke-width="1"/><path d="M72,455.0 L79,458.5 L79,467.0 L72,470.5 L65,467.0 L65,458.5 Z" fill="#8a8a8a"/><path d="M72,455.0 L79,458.5 L72,462.0 L65,458.5 Z" fill="#b8b8b8"/><path d="M72,462.0 L79,458.5 L79,467.0 L72,470.5 Z" fill="#6d6d6d"/><rect x="64" y="474.5" width="16" height="16" fill="#ebe9e6"/><rect x="64" y="474.5" width="4" height="4" fill="#9b9b9b"/><rect x="68" y="474.5" width="4" height="4" fill="#9b9b9b"/><rect x="76" y="474.5" width="4" height="4" fill="#9b9b9b"/><rect x="64" y="478.5" width="4" height="4" fill="#9b9b9b"/><rect x="76" y="478.5" width="4" height="4" fill="#9b9b9b"/><rect x="64" y="482.5" width="4" height="4" fill="#9b9b9b"/><rect x="64" y="486.5" width="4" height="4" fill="#9b9b9b"/><rect x="72" y="486.5" width="4" height="4" fill="#9b9b9b"/><rect x="76" y="486.5" width="4" height="4" fill="#9b9b9b"/><rect x="44" y="493.2" width="16" height="16" fill="#ebe9e6"/><rect x="44" y="493.2" width="4" height="4" fill="#9b9b9b"/><rect x="48" y="493.2" width="4" height="4" fill="#9b9b9b"/><rect x="56" y="493.2" width="4" height="4" fill="#9b9b9b"/><rect x="44" y="497.2" width="4" height="4" fill="#9b9b9b"/><rect x="56" y="497.2" width="4" height="4" fill="#9b9b9b"/><rect x="44" y="501.2" width="4" height="4" fill="#9b9b9b"/><rect x="44" y="505.2" width="4" height="4" fill="#9b9b9b"/><rect x="52" y="505.2" width="4" height="4" fill="#9b9b9b"/><rect x="56" y="505.2" width="4" height="4" fill="#9b9b9b"/><rect x="44" y="512.2" width="16" height="16" fill="#ebe9e6"/><rect x="44" y="512.2" width="4" height="4" fill="#9b9b9b"/><rect x="48" y="512.2" width="4" height="4" fill="#9b9b9b"/><rect x="56" y="512.2" width="4" height="4" fill="#9b9b9b"/><rect x="44" y="516.2" width="4" height="4" fill="#9b9b9b"/><rect x="56" y="516.2" width="4" height="4" fill="#9b9b9b"/><rect x="44" y="520.2" width="4" height="4" fill="#9b9b9b"/><rect x="44" y="524.2" width="4" height="4" fill="#9b9b9b"/><rect x="52" y="524.2" width="4" height="4" fill="#9b9b9b"/><rect x="56" y="524.2" width="4" height="4" fill="#9b9b9b"/><rect x="44" y="531.2" width="16" height="16" fill="#ebe9e6"/><rect x="44" y="531.2" width="4" height="4" fill="#9b9b9b"/><rect x="48" y="531.2" width="4" height="4" fill="#9b9b9b"/><rect x="56" y="531.2" width="4" height="4" fill="#9b9b9b"/><rect x="44" y="535.2" width="4" height="4" fill="#9b9b9b"/><rect x="56" y="535.2" width="4" height="4" fill="#9b9b9b"/><rect x="44" y="539.2" width="4" height="4" fill="#9b9b9b"/><rect x="44" y="543.2" width="4" height="4" fill="#9b9b9b"/><rect x="52" y="543.2" width="4" height="4" fill="#9b9b9b"/><rect x="56" y="543.2" width="4" height="4" fill="#9b9b9b"/><rect x="24" y="588.2" width="16" height="16" fill="#d6d6d6"/><rect x="24" y="588.2" width="4" height="4" fill="#555"/><rect x="28" y="588.2" width="4" height="4" fill="#555"/><rect x="36" y="588.2" width="4" height="4" fill="#555"/><rect x="24" y="592.2" width="4" height="4" fill="#555"/><rect x="36" y="592.2" width="4" height="4" fill="#555"/><rect x="24" y="596.2" width="4" height="4" fill="#555"/><rect x="24" y="600.2" width="4" height="4" fill="#555"/><rect x="32" y="600.2" width="4" height="4" fill="#555"/><rect x="36" y="600.2" width="4" height="4" fill="#555"/><path d="M44.8,563.5 Q47,559.0 51,559.0 Q56,559.0 59,552.5" fill="none" stroke="#a3a3a3" stroke-width="2.2"/><path d="M44.8,582.5 Q47,578.0 51,578.0 Q56,578.0 59,571.5" fill="none" stroke="#a3a3a3" stroke-width="2.2"/><rect x="202.5" y="153.5" width="12.2" height="12" fill="#303030" stroke="#000" stroke-width="1"/><rect x="199.5" y="191.0" width="13" height="13" rx="1" fill="#fff" stroke="#b7b3ae" stroke-width="1"/><path d="M202.3,197.3 L205.1,201.8 L209.8,193.8" fill="none" stroke="#000" stroke-width="2.2" stroke-linejoin="round"/><rect x="199.5" y="248.0" width="13" height="13" rx="1" fill="#fff" stroke="#b7b3ae" stroke-width="1"/><path d="M202.3,254.3 L205.1,258.8 L209.8,250.8" fill="none" stroke="#2b63ad" stroke-width="2.2" stroke-linejoin="round"/><rect x="199.5" y="267.0" width="13" height="13" rx="1" fill="#fff" stroke="#b7b3ae" stroke-width="1"/><path d="M202.3,273.3 L205.1,277.8 L209.8,269.8" fill="none" stroke="#2b63ad" stroke-width="2.2" stroke-linejoin="round"/><rect x="199.5" y="286.0" width="13" height="13" rx="1" fill="#fff" stroke="#b7b3ae" stroke-width="1"/><rect x="199.5" y="305.0" width="13" height="13" rx="1" fill="#fff" stroke="#b7b3ae" stroke-width="1"/><path d="M202.3,311.3 L205.1,315.8 L209.8,307.8" fill="none" stroke="#2b63ad" stroke-width="2.2" stroke-linejoin="round"/><rect x="199.5" y="324.0" width="13" height="13" rx="1" fill="#fff" stroke="#b7b3ae" stroke-width="1"/><rect x="199.5" y="343.0" width="13" height="13" rx="1" fill="#efedea" stroke="#b7b3ae" stroke-width="1"/><path d="M202.3,349.3 L205.1,353.8 L209.8,345.8" fill="none" stroke="#8e8c89" stroke-width="1.5" stroke-linejoin="round"/><rect x="199.5" y="362.0" width="13" height="13" rx="1" fill="#efedea" stroke="#b7b3ae" stroke-width="1"/><path d="M202.3,368.3 L205.1,372.8 L209.8,364.8" fill="none" stroke="#8e8c89" stroke-width="1.5" stroke-linejoin="round"/><rect x="199.5" y="381.0" width="13" height="13" rx="1" fill="#efedea" stroke="#b7b3ae" stroke-width="1"/><path d="M202.3,387.3 L205.1,391.8 L209.8,383.8" fill="none" stroke="#8e8c89" stroke-width="1.5" stroke-linejoin="round"/><rect x="199.5" y="400.0" width="13" height="13" rx="1" fill="#efedea" stroke="#b7b3ae" stroke-width="1"/><rect x="199.5" y="419.0" width="13" height="13" rx="1" fill="#fff" stroke="#b7b3ae" stroke-width="1"/><rect x="199.5" y="438.0" width="13" height="13" rx="1" fill="#efedea" stroke="#b7b3ae" stroke-width="1"/><path d="M202.3,444.3 L205.1,448.8 L209.8,440.8" fill="none" stroke="#8e8c89" stroke-width="1.5" stroke-linejoin="round"/><rect x="199.5" y="457.0" width="13" height="13" rx="1" fill="#efedea" stroke="#b7b3ae" stroke-width="1"/><path d="M202.3,463.3 L205.1,467.8 L209.8,459.8" fill="none" stroke="#8e8c89" stroke-width="1.5" stroke-linejoin="round"/><rect x="199.5" y="476.0" width="13" height="13" rx="1" fill="#efedea" stroke="#b7b3ae" stroke-width="1"/><path d="M202.3,482.3 L205.1,486.8 L209.8,478.8" fill="none" stroke="#8e8c89" stroke-width="1.5" stroke-linejoin="round"/><rect x="199.5" y="495.0" width="13" height="13" rx="1" fill="#efedea" stroke="#b7b3ae" stroke-width="1"/><path d="M202.3,501.3 L205.1,505.8 L209.8,497.8" fill="none" stroke="#8e8c89" stroke-width="1.5" stroke-linejoin="round"/><rect x="199.5" y="514.0" width="13" height="13" rx="1" fill="#efedea" stroke="#b7b3ae" stroke-width="1"/><path d="M202.3,520.3 L205.1,524.8 L209.8,516.8" fill="none" stroke="#8e8c89" stroke-width="1.5" stroke-linejoin="round"/><rect x="199.5" y="533.0" width="13" height="13" rx="1" fill="#efedea" stroke="#b7b3ae" stroke-width="1"/><path d="M202.3,539.3 L205.1,543.8 L209.8,535.8" fill="none" stroke="#8e8c89" stroke-width="1.5" stroke-linejoin="round"/><rect x="199.5" y="552.0" width="13" height="13" rx="1" fill="#efedea" stroke="#b7b3ae" stroke-width="1"/><path d="M202.3,558.3 L205.1,562.8 L209.8,554.8" fill="none" stroke="#8e8c89" stroke-width="1.5" stroke-linejoin="round"/><rect x="199.5" y="571.0" width="13" height="13" rx="1" fill="#efedea" stroke="#b7b3ae" stroke-width="1"/><path d="M202.3,577.3 L205.1,581.8 L209.8,573.8" fill="none" stroke="#8e8c89" stroke-width="1.5" stroke-linejoin="round"/><rect x="199.5" y="590.0" width="13" height="13" rx="1" fill="#fff" stroke="#b7b3ae" stroke-width="1"/><path d="M202.3,596.3 L205.1,600.8 L209.8,592.8" fill="none" stroke="#2b63ad" stroke-width="2.2" stroke-linejoin="round"/></svg>
<span class="t" style="left:864.30px;top:7.69px;font-size:13.95px;line-height:13.95px;font-weight:normal;color:#dfdbd2;transform:scaleX(1.1847);">robot.rviz* - RViz</span>
<span class="t" style="left:10.50px;top:32.81px;font-size:13.81px;line-height:13.81px;font-weight:normal;color:#0a0a0a;transform:scaleX(1.0564);">File</span>
<span class="t" style="left:49.40px;top:32.81px;font-size:13.81px;line-height:13.81px;font-weight:normal;color:#0a0a0a;transform:scaleX(1.0349);">Panels</span>
<span class="t" style="left:108.50px;top:32.81px;font-size:13.81px;line-height:13.81px;font-weight:normal;color:#0a0a0a;transform:scaleX(1.0844);">Help</span>
<span class="t" style="left:38.30px;top:63.67px;font-size:12.79px;line-height:12.79px;font-weight:normal;color:#0a0a0a;transform:scaleX(0.9186);">Move Camera</span>
<span class="t" style="left:156.30px;top:63.67px;font-size:12.79px;line-height:12.79px;font-weight:normal;color:#0a0a0a;transform:scaleX(0.9869);">Interact</span>
<span class="t" style="left:242.40px;top:63.67px;font-size:12.79px;line-height:12.79px;font-weight:normal;color:#0a0a0a;transform:scaleX(0.9227);">Select</span>
<span class="t" style="left:319.40px;top:63.67px;font-size:12.79px;line-height:12.79px;font-weight:normal;color:#0a0a0a;transform:scaleX(0.9173);">2D Pose Estimate</span>
<span class="t" style="left:457.40px;top:63.67px;font-size:12.79px;line-height:12.79px;font-weight:normal;color:#0a0a0a;transform:scaleX(0.8958);">2D Nav Goal</span>
<span class="t" style="left:567.30px;top:63.67px;font-size:12.79px;line-height:12.79px;font-weight:normal;color:#0a0a0a;transform:scaleX(0.9496);">Publish Point</span>
<span class="t" style="left:26.40px;top:94.93px;font-size:13.66px;line-height:13.66px;font-weight:normal;color:#0a0a0a;transform:scaleX(1.0575);">Displays</span>
<span class="t" style="left:46.50px;top:115.32px;font-size:14.39px;line-height:14.39px;font-weight:normal;color:#0a0a0a;transform:scaleX(1.0579);">Global Options</span>
<span class="t" style="left:44.40px;top:134.32px;font-size:14.39px;line-height:14.39px;font-weight:normal;color:#0a0a0a;transform:scaleX(1.0080);">Fixed Frame</span>
<span class="t" style="left:44.40px;top:153.32px;font-size:14.39px;line-height:14.39px;font-weight:normal;color:#0a0a0a;transform:scaleX(1.0471);">Background Color</span>
<span class="t" style="left:44.40px;top:172.32px;font-size:14.39px;line-height:14.39px;font-weight:normal;color:#0a0a0a;transform:scaleX(1.0084);">Frame Rate</span>
<span class="t" style="left:44.40px;top:191.32px;font-size:14.39px;line-height:14.39px;font-weight:normal;color:#0a0a0a;transform:scaleX(1.1015);">Default Light</span>
<span class="t" style="left:46.30px;top:210.32px;font-size:14.39px;line-height:14.39px;font-weight:normal;color:#0a0a0a;transform:scaleX(1.0310);">Global Status: Ok</span>
<span class="t" style="left:66.50px;top:229.32px;font-size:14.39px;line-height:14.39px;font-weight:normal;color:#0a0a0a;transform:scaleX(1.0055);">Fixed Frame</span>
<span class="t" style="left:46.80px;top:248.32px;font-size:14.39px;line-height:14.39px;font-weight:bold;color:#3875c4;transform:scaleX(0.9701);">Grid</span>
<span class="t" style="left:46.80px;top:267.32px;font-size:14.39px;line-height:14.39px;font-weight:bold;color:#3875c4;transform:scaleX(1.0540);">RobotModel</span>
<span class="t" style="left:46.30px;top:286.32px;font-size:14.39px;line-height:14.39px;font-weight:normal;color:#0a0a0a;transform:scaleX(0.9042);">TF</span>
<span class="t" style="left:46.80px;top:305.32px;font-size:14.39px;line-height:14.39px;font-weight:bold;color:#3875c4;transform:scaleX(1.0615);">TwistMarker</span>
<span class="t" style="left:46.30px;top:324.32px;font-size:14.39px;line-height:14.39px;font-weight:normal;color:#0a0a0a;transform:scaleX(0.9903);">Sensing</span>
<span class="t" style="left:66.60px;top:343.32px;font-size:14.39px;line-height:14.39px;font-weight:normal;color:#b4b2ae;transform:scaleX(1.0954);">Odometry</span>
<span class="t" style="left:66.60px;top:362.32px;font-size:14.39px;line-height:14.39px;font-weight:normal;color:#b4b2ae;transform:scaleX(0.9681);">LaserScan</span>
<span class="t" style="left:66.60px;top:381.32px;font-size:14.39px;line-height:14.39px;font-weight:normal;color:#b4b2ae;transform:scaleX(1.0485);">PointCloud2</span>
<span class="t" style="left:66.60px;top:400.32px;font-size:14.39px;line-height:14.39px;font-weight:normal;color:#b4b2ae;transform:scaleX(1.0130);">Imu</span>
<span class="t" style="left:46.50px;top:419.32px;font-size:14.39px;line-height:14.39px;font-weight:normal;color:#0a0a0a;transform:scaleX(1.0634);">Navigation</span>
<span class="t" style="left:66.60px;top:438.32px;font-size:14.39px;line-height:14.39px;font-weight:normal;color:#b4b2ae;transform:scaleX(1.0807);">Exploration</span>
<span class="t" style="left:86.20px;top:457.32px;font-size:14.39px;line-height:14.39px;font-weight:normal;color:#b4b2ae;transform:scaleX(1.0912);">Exploration ...</span>
<span class="t" style="left:86.20px;top:476.32px;font-size:14.39px;line-height:14.39px;font-weight:normal;color:#b4b2ae;transform:scaleX(1.0745);">Exploration C...</span>
<span class="t" style="left:66.60px;top:495.32px;font-size:14.39px;line-height:14.39px;font-weight:normal;color:#b4b2ae;transform:scaleX(1.0371);">Static Map</span>
<span class="t" style="left:66.60px;top:514.32px;font-size:14.39px;line-height:14.39px;font-weight:normal;color:#b4b2ae;transform:scaleX(1.0293);">Global Costmap</span>
<span class="t" style="left:66.60px;top:533.32px;font-size:14.39px;line-height:14.39px;font-weight:normal;color:#b4b2ae;transform:scaleX(1.0200);">Local Costmap</span>
<span class="t" style="left:66.60px;top:552.32px;font-size:14.39px;line-height:14.39px;font-weight:normal;color:#b4b2ae;transform:scaleX(1.0175);">Global Plan</span>
<span class="t" style="left:66.60px;top:571.32px;font-size:14.39px;line-height:14.39px;font-weight:normal;color:#b4b2ae;transform:scaleX(1.0015);">Local Plan</span>
<span class="t" style="left:46.50px;top:590.32px;font-size:14.39px;line-height:14.39px;font-weight:bold;color:#3875c4;transform:scaleX(1.0320);">Map</span>
<span class="t" style="left:199.40px;top:134.32px;font-size:14.39px;line-height:14.39px;font-weight:normal;color:#0a0a0a;transform:scaleX(1.0726);">odom</span>
<span class="t" style="left:219.60px;top:153.32px;font-size:14.39px;line-height:14.39px;font-weight:normal;color:#0a0a0a;transform:scaleX(1.0015);">48; 48; 48</span>
<span class="t" style="left:199.40px;top:172.32px;font-size:14.39px;line-height:14.39px;font-weight:normal;color:#0a0a0a;transform:scaleX(0.9749);">30</span>
<span class="t" style="left:199.40px;top:229.32px;font-size:14.39px;line-height:14.39px;font-weight:normal;color:#0a0a0a;transform:scaleX(0.9907);">OK</span>
<span class="t" style="left:35.30px;top:1001.69px;font-size:13.95px;line-height:13.95px;font-weight:normal;color:#0a0a0a;transform:scaleX(1.0836);">Add</span>
<span class="t" style="left:116.00px;top:1001.69px;font-size:13.95px;line-height:13.95px;font-weight:normal;color:#b4b2ae;transform:scaleX(1.1088);">Duplicate</span>
<span class="t" style="left:220.50px;top:1001.69px;font-size:13.95px;line-height:13.95px;font-weight:normal;color:#b4b2ae;transform:scaleX(1.0488);">Remove</span>
<span class="t" style="left:319.80px;top:1001.69px;font-size:13.95px;line-height:13.95px;font-weight:normal;color:#b4b2ae;transform:scaleX(1.0428);">Rename</span>
<span class="t" style="left:9.30px;top:1033.69px;font-size:13.95px;line-height:13.95px;font-weight:normal;color:#0a0a0a;transform:scaleX(1.0508);">Reset</span>
<span class="t" style="left:62.00px;top:1032.44px;font-size:14.24px;line-height:14.24px;font-weight:bold;color:#111;transform:scaleX(1.0468);">Left-Click:</span>
<span class="t" style="left:138.90px;top:1032.44px;font-size:14.24px;line-height:14.24px;font-weight:normal;color:#0a0a0a;transform:scaleX(1.0648);">Rotate.</span>
<span class="t" style="left:192.80px;top:1032.44px;font-size:14.24px;line-height:14.24px;font-weight:bold;color:#111;transform:scaleX(1.0469);">Middle-Click:</span>
<span class="t" style="left:289.60px;top:1032.44px;font-size:14.24px;line-height:14.24px;font-weight:normal;color:#0a0a0a;transform:scaleX(1.0474);">Move X/Y.</span>
<span class="t" style="left:361.90px;top:1032.44px;font-size:14.24px;line-height:14.24px;font-weight:bold;color:#111;transform:scaleX(1.0492);">Right-Click/Mouse Wheel:</span>
<span class="t" style="left:547.60px;top:1032.44px;font-size:14.24px;line-height:14.24px;font-weight:normal;color:#0a0a0a;transform:scaleX(0.5051);">:</span>
<span class="t" style="left:554.00px;top:1032.44px;font-size:14.24px;line-height:14.24px;font-weight:normal;color:#0a0a0a;transform:scaleX(1.0429);">Zoom.</span>
<span class="t" style="left:600.40px;top:1032.44px;font-size:14.24px;line-height:14.24px;font-weight:bold;color:#111;transform:scaleX(1.0584);">Shift</span>
<span class="t" style="left:636.00px;top:1032.44px;font-size:14.24px;line-height:14.24px;font-weight:normal;color:#0a0a0a;transform:scaleX(0.5051);">:</span>
<span class="t" style="left:642.50px;top:1032.44px;font-size:14.24px;line-height:14.24px;font-weight:normal;color:#0a0a0a;transform:scaleX(1.0880);">More options.</span>
<span class="t" style="left:1810.50px;top:1029.44px;font-size:14.24px;line-height:14.24px;font-weight:normal;color:#0a0a0a;transform:scaleX(1.0567);">31 fps</span>
</body></html>
